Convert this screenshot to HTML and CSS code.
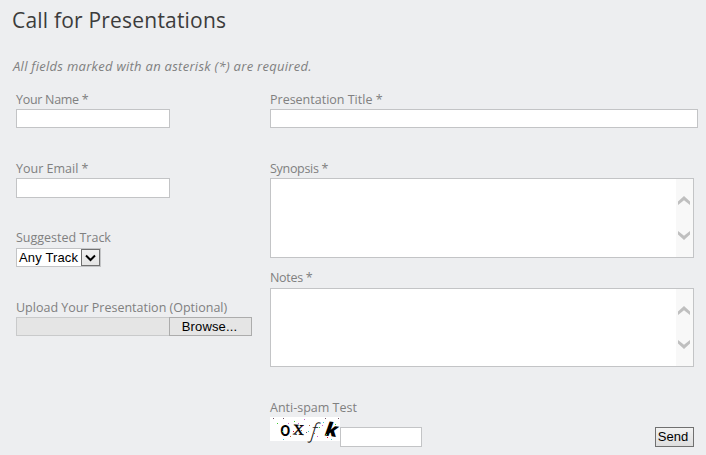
FILE: index.html
```html
<!DOCTYPE html>
<html lang="en">
<head>
<meta charset="utf-8">
<title>Call for Presentations</title>
<link rel="stylesheet" href="styles.css">
</head>
<body>
<h1>Call for Presentations</h1>
<p class="hint">All fields marked with an asterisk (*) are required.</p>
<form class="form">
  <div class="column left">
    <div class="field"><label class="tight" for="name">Your Name *</label><input id="name" class="box" type="text"></div>
    <div class="field email"><label for="email">Your Email *</label><input id="email" class="box tall" type="text"></div>
    <div class="field"><label class="raised">Suggested Track</label>
      <div class="select"><span class="value">Any Track</span><span class="drop"><svg width="11" height="8" viewBox="0 0 11 8"><path d="M1 1.5 5.5 6 10 1.5" fill="none" stroke="#000" stroke-width="2"/></svg></span></div>
    </div>
    <div class="field"><label>Upload Your Presentation (Optional)</label>
      <div class="upload"><span class="path"></span><button type="button" class="browse">Browse...</button></div>
    </div>
  </div>
  <div class="column right">
    <div class="field"><label for="title">Presentation Title *</label><input id="title" class="box" type="text"></div>
    <div class="field synopsis"><label class="tight">Synopsis *</label>
      <div class="area"><div class="scroll"><svg width="12" height="9" viewBox="0 0 12 9"><path d="M0 9V5.5L6 0l6 5.5V9L6 4.2z" fill="#bfbfbf"/></svg><svg width="12" height="9" viewBox="0 0 12 9"><path d="M0 0v3.5L6 9l6-5.5V0L6 4.8z" fill="#bfbfbf"/></svg></div></div>
    </div>
    <div class="field notes"><label class="raised tight">Notes *</label>
      <div class="area"><div class="scroll"><svg width="12" height="9" viewBox="0 0 12 9"><path d="M0 9V5.5L6 0l6 5.5V9L6 4.2z" fill="#bfbfbf"/></svg><svg width="12" height="9" viewBox="0 0 12 9"><path d="M0 0v3.5L6 9l6-5.5V0L6 4.8z" fill="#bfbfbf"/></svg></div></div>
    </div>
    <div class="field"><label for="spam">Anti-spam Test</label>
      <div class="verify">
        <svg class="captcha" width="70" height="24" viewBox="0 0 70 24">
          <rect width="70" height="24" fill="#fff"/>
          <text x="10" y="18.5" font-family="Open Sans, sans-serif" font-size="20" font-weight="600" textLength="10.5" lengthAdjust="spacingAndGlyphs">o</text>
          <text x="23" y="17.5" font-family="Liberation Serif, serif" font-size="21" textLength="11" lengthAdjust="spacingAndGlyphs" stroke="#000" stroke-width=".3" transform="rotate(4 28 14)">x</text>
          <text x="41" y="21" font-family="Open Sans, sans-serif" font-size="21" font-weight="300" font-style="italic" fill="#222" transform="rotate(5 43 14)">f</text>
          <text x="55" y="19.5" font-family="Open Sans, sans-serif" font-size="19" font-weight="800" font-style="italic" textLength="12.5" lengthAdjust="spacingAndGlyphs" transform="rotate(7 62 14)">k</text>
          <g shape-rendering="crispEdges">
            <path d="M3 1h1v1H3zM13 1h1v1h-1zM68 1h1v1h-1zM55 1h1v1h-1zM36 15h1v1h-1z" fill="#756"/>
            <path d="M18 6h1v1h-1zM34 2h1v1h-1zM28 6h1v1h-1zM52 8h1v1h-1zM32 9h1v1h-1zM47 19h1v1h-1z" fill="#c6c"/>
            <path d="M7 6h1v1H7zM24 4h1v1h-1zM49 10h1v1h-1zM12 14h1v1h-1zM65 7h1v1h-1zM56 17h1v1h-1z" fill="#4c3"/>
            <path d="M39 8h1v1h-1zM44 16h1v1h-1zM31 13h1v1h-1zM20 19h1v1h-1z" fill="#b63"/>
            <path d="M38 14h1v1h-1zM61 22h1v1h-1zM13 22h1v1h-1zM53 5h1v1h-1z" fill="#4cc"/>
            <path d="M23 14h1v1h-1zM57 20h1v1h-1z" fill="#d13"/>
          </g>
        </svg>
        <input id="spam" class="box answer" type="text">
        <button type="button" class="send">Send</button>
      </div>
    </div>
  </div>
</form>
</body>
</html>
```
FILE: styles.css
```css
* { box-sizing: border-box; }
body {
  margin: 0;
  height: 455px;
  overflow: hidden;
  background: #edeef0;
  color: #808080;
  font-family: "Open Sans", "Noto Sans", sans-serif;
}
h1 {
  margin: 0;
  padding: 5px 0 0 12px;
  height: 52px;
  color: #3c3c3c;
  font-size: 21px;
  font-weight: 400;
  letter-spacing: .2px;
  line-height: 30px;
}
.hint {
  margin: 0;
  padding-left: 13px;
  height: 38px;
  font-size: 13px;
  font-style: italic;
  letter-spacing: .28px;
  line-height: 29px;
}
.form {
  display: grid;
  grid-template-columns: 254px 428px;
  padding-left: 16px;
}
.column { display: flex; flex-direction: column; }
.field { height: 69px; }
.email { height: 70px; }
.synopsis { height: 110px; }
.notes { height: 129px; }
label {
  display: block;
  height: 19px;
  font-size: 12.5px;
  line-height: 19px;
  white-space: nowrap;
}
label.raised { line-height: 17px; }
label.tight { letter-spacing: -.3px; }
.box {
  display: block;
  width: 154px;
  height: 19px;
  margin: 0;
  padding: 1px 3px;
  border: 1px solid #c3c4c6;
  border-radius: 0;
  background: #fff;
}
.tall { height: 20px; }
.right .box { width: 428px; }
.select {
  display: flex;
  width: 85px;
  height: 19px;
  border: 1px solid #c3c4c6;
  background: #fff;
  color: #000;
  font: 13px/17px "Liberation Sans", sans-serif;
}
.value { width: 64px; padding-left: 2px; letter-spacing: .15px; white-space: nowrap; }
.drop {
  display: flex;
  align-items: center;
  justify-content: center;
  width: 19px;
  height: 17px;
  border: 1px solid #707070;
  background: linear-gradient(#f0f0f0, #e5e5e5);
}
.upload { display: flex; height: 19px; }
.path { width: 153px; border: 1px solid #c9cacb; border-right: 0; background: #e5e5e5; }
button {
  margin: 0;
  padding: 0;
  border-radius: 0;
  color: #000;
  font: 13px/17px "Liberation Sans", sans-serif;
}
.browse { width: 83px; padding-right: 2px; border: 1px solid #acacac; background: #e5e5e5; letter-spacing: .15px; }
.area {
  display: flex;
  justify-content: flex-end;
  width: 424px;
  height: 80px;
  border: 1px solid #c3c4c6;
  background: #fff;
}
.notes .area { height: 79px; }
.scroll {
  display: flex;
  flex-direction: column;
  align-items: flex-start;
  justify-content: space-between;
  width: 17px;
  padding: 17px 0 17px 2px;
  background: #f8f8f8;
}
.verify { display: flex; width: 424px; height: 30px; }
.captcha { flex: none; overflow: visible; }
.right .answer { width: 82px; height: 20px; margin-top: 10px; }
.send {
  width: 39px;
  height: 20px;
  margin: 10px 0 0 auto;
  padding: 0 3px 1px 0;
  border: 1px solid #707070;
  background: linear-gradient(#f2f2f2, #dedede);
}
```
